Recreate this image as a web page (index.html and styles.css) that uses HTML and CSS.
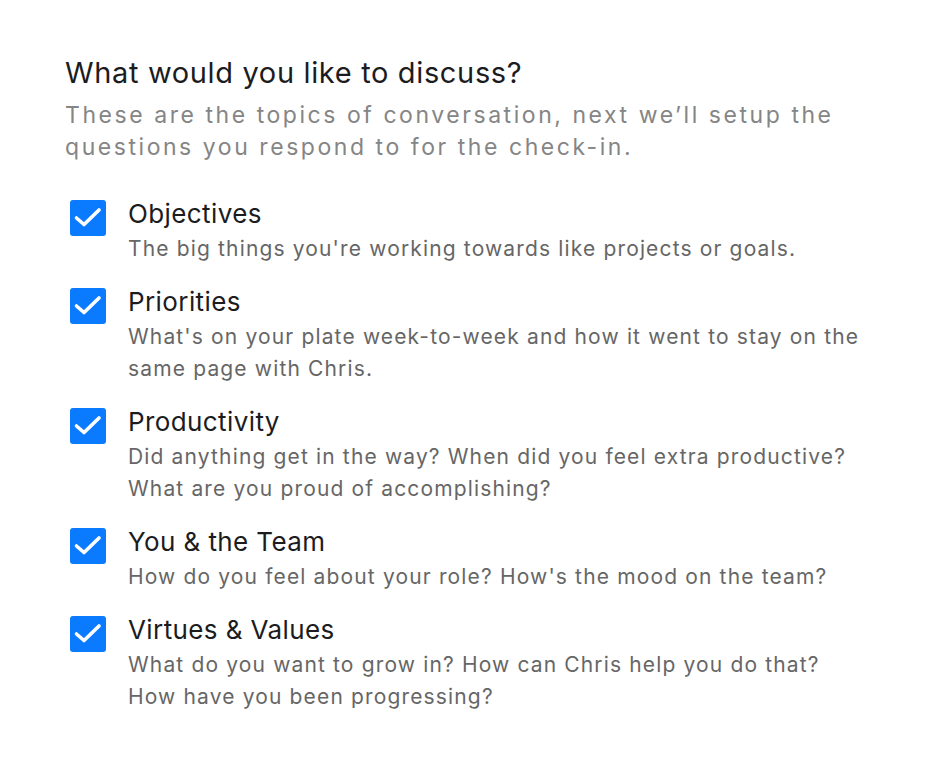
FILE: index.html
```html
<!DOCTYPE html>
<html>
<head>
    <title>Check-in Topics</title>
    <link rel="stylesheet" href="styles.css">
</head>
<body>

<div class="panel">
    <h1>What would you like to discuss?</h1>
    <p class="intro">These are the topics of conversation, next we&rsquo;ll setup the questions you respond to for the check-in.</p>

    <ul class="topics">
        <li class="topic">
            <span class="check"><svg viewBox="0 0 36 36"><path d="M6.5 18 L14 24.5 L29 10"/></svg></span>
            <div class="topic-text">
                <div class="topic-title">Objectives</div>
                <div class="topic-desc">The big things you're working towards like projects or goals.</div>
            </div>
        </li>
        <li class="topic">
            <span class="check"><svg viewBox="0 0 36 36"><path d="M6.5 18 L14 24.5 L29 10"/></svg></span>
            <div class="topic-text">
                <div class="topic-title">Priorities</div>
                <div class="topic-desc">What's on your plate week-to-week and how it went to stay on the same page with Chris.</div>
            </div>
        </li>
        <li class="topic">
            <span class="check"><svg viewBox="0 0 36 36"><path d="M6.5 18 L14 24.5 L29 10"/></svg></span>
            <div class="topic-text">
                <div class="topic-title">Productivity</div>
                <div class="topic-desc">Did anything get in the way? When did you feel extra productive? What are you proud of accomplishing?</div>
            </div>
        </li>
        <li class="topic">
            <span class="check"><svg viewBox="0 0 36 36"><path d="M6.5 18 L14 24.5 L29 10"/></svg></span>
            <div class="topic-text">
                <div class="topic-title">You &amp; the Team</div>
                <div class="topic-desc">How do you feel about your role? How's the mood on the team?</div>
            </div>
        </li>
        <li class="topic">
            <span class="check"><svg viewBox="0 0 36 36"><path d="M6.5 18 L14 24.5 L29 10"/></svg></span>
            <div class="topic-text">
                <div class="topic-title">Virtues &amp; Values</div>
                <div class="topic-desc">What do you want to grow in? How can Chris help you do that? How have you been progressing?</div>
            </div>
        </li>
    </ul>
</div>

</body>
</html>
```

FILE: styles.css
```css
body {
    margin: 0;
    background-color: #fff;
    font-family: Inter, "Noto Sans", sans-serif;
    color: #1d1d1f;
}
.panel {
    padding: 55px 0 0 65px;
    width: 820px;
}
h1 {
    margin: 0;
    font-size: 29px;
    font-weight: 400;
    line-height: 36px;
    letter-spacing: 0.65px;
    color: #1c1c1e;
}
.intro {
    margin: 8px 0 0;
    font-size: 23px;
    line-height: 32px;
    letter-spacing: 2.55px;
    color: #858585;
}
.topics {
    list-style: none;
    margin: 32px 0 0 5px;
    padding: 0;
}
.topic {
    display: flex;
    gap: 22px;
    margin-bottom: 18px;
}
.check {
    flex: none;
    width: 36px;
    height: 36px;
    margin-top: 5px;
    border-radius: 3px;
    background-color: #0a7aff;
}
.check svg {
    display: block;
    width: 36px;
    height: 36px;
    fill: none;
    stroke: #fff;
    stroke-width: 3.6;
    stroke-linecap: round;
    stroke-linejoin: round;
}
.topic-text {
    width: 740px;
}
.topic-title {
    font-size: 26px;
    line-height: 38px;
    letter-spacing: 0.4px;
    color: #1c1c1e;
}
.topic-desc {
    font-size: 21px;
    line-height: 32px;
    letter-spacing: 1.15px;
    color: #666;
}
```
